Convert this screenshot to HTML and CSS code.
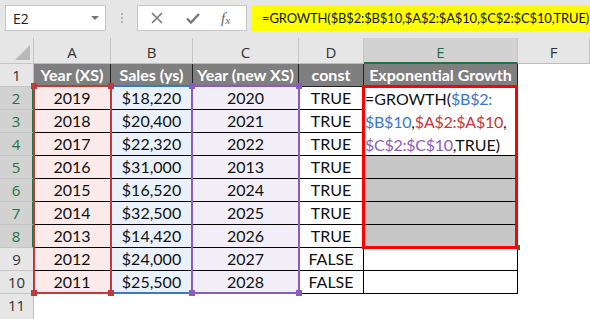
FILE: index.html
```html
<!DOCTYPE html>
<html lang="en">
<head>
  <meta charset="UTF-8">
  <title>GROWTH function</title>
  <link rel="stylesheet" href="styles.css">
</head>
<body>

<!-- Formula bar -->
<div class="formula-bar">
  <div class="name-box">
    <span>E2</span>
    <span class="caret"></span>
  </div>
  <div class="grip"><i></i><i></i><i></i></div>
  <div class="fx-box">
    <svg class="icon" width="12" height="12" viewBox="0 0 12 12">
      <path d="M1 1 L11 11 M11 1 L1 11" stroke="#7a7a7a" stroke-width="1.6" fill="none"/>
    </svg>
    <svg class="icon" width="14" height="11" viewBox="0 0 14 11">
      <path d="M1 5.5 L5 9.5 L13 1" stroke="#7a7a7a" stroke-width="2.4" fill="none"/>
    </svg>
    <span class="fx">f<sub>x</sub></span>
  </div>
  <div class="formula">=GROWTH($B$2:$B$10,$A$2:$A$10,$C$2:$C$10,TRUE)</div>
</div>

<!-- Sheet -->
<div class="sheet">
  <div class="corner"><span class="tri"></span></div>
  <div class="col">A</div>
  <div class="col">B</div>
  <div class="col">C</div>
  <div class="col">D</div>
  <div class="col sel">E</div>
  <div class="col">F</div>

  <div class="rh">1</div>
  <div class="h">Year (XS)</div>
  <div class="h">Sales (ys)</div>
  <div class="h">Year (new XS)</div>
  <div class="h">const</div>
  <div class="h">Exponential Growth</div>
  <div class="x"></div>

  <div class="edit">
    <div>=GROWTH(<span class="ref-b">$B$2:</span></div>
    <div><span class="ref-b">$B$10</span>,<span class="ref-a">$A$2:$A$10</span>,</div>
    <div><span class="ref-c">$C$2:$C$10</span>,TRUE)</div>
  </div>

  <div class="rh sel">2</div>
  <div class="d a">2019</div><div class="d b">$18,220</div><div class="d c">2020</div><div class="d">TRUE</div>
  <div class="x"></div>

  <div class="rh sel">3</div>
  <div class="d a">2018</div><div class="d b">$20,400</div><div class="d c">2021</div><div class="d">TRUE</div>
  <div class="x"></div>

  <div class="rh sel">4</div>
  <div class="d a">2017</div><div class="d b">$22,320</div><div class="d c">2022</div><div class="d">TRUE</div>
  <div class="x"></div>

  <div class="rh sel">5</div>
  <div class="d a">2016</div><div class="d b">$31,000</div><div class="d c">2013</div><div class="d">TRUE</div>
  <div class="d g"></div><div class="x"></div>

  <div class="rh sel">6</div>
  <div class="d a">2015</div><div class="d b">$16,520</div><div class="d c">2024</div><div class="d">TRUE</div>
  <div class="d g"></div><div class="x"></div>

  <div class="rh sel">7</div>
  <div class="d a">2014</div><div class="d b">$32,500</div><div class="d c">2025</div><div class="d">TRUE</div>
  <div class="d g"></div><div class="x"></div>

  <div class="rh sel">8</div>
  <div class="d a">2013</div><div class="d b">$14,420</div><div class="d c">2026</div><div class="d">TRUE</div>
  <div class="d g"></div><div class="x"></div>

  <div class="rh">9</div>
  <div class="d a">2012</div><div class="d b">$24,000</div><div class="d c">2027</div><div class="d">FALSE</div>
  <div class="d"></div><div class="x"></div>

  <div class="rh">10</div>
  <div class="d a">2011</div><div class="d b">$25,500</div><div class="d c">2028</div><div class="d">FALSE</div>
  <div class="d"></div><div class="x"></div>

  <div class="rh last">11</div>
  <div class="x rest"></div>

  <!-- range highlights drawn over the grid -->
  <div class="range range-b"><i class="hd tl"></i><i class="hd tr"></i><i class="hd bl"></i><i class="hd br"></i></div>
  <div class="range range-a"><i class="hd tl"></i><i class="hd tr"></i><i class="hd bl"></i><i class="hd br"></i></div>
  <div class="range range-c"><i class="hd tl"></i><i class="hd tr"></i><i class="hd bl"></i><i class="hd br"></i></div>
  <div class="selection"></div>
  <div class="fill-handle"></div>
</div>

</body>
</html>
```

FILE: styles.css
```css
body {
  margin: 0;
  background-color: #e6e6e6;
  font-family: Lato, "Liberation Sans", sans-serif;
  overflow: hidden;
}

/* formula bar */
.formula-bar {
  height: 38px;
  display: flex;
  align-items: flex-start;
  padding: 5px 0 0 5px;
  box-sizing: border-box;
  font-family: "Open Sans", sans-serif;
}
.name-box {
  width: 101px;
  height: 26px;
  box-sizing: border-box;
  background-color: white;
  border: 1px solid #c6c6c6;
  display: flex;
  align-items: center;
  justify-content: space-between;
  padding: 0 6px 0 7px;
  font-size: 14px;
  color: #222;
}
.caret {
  width: 0;
  height: 0;
  border-left: 4px solid transparent;
  border-right: 4px solid transparent;
  border-top: 4px solid #777;
}
.grip {
  width: 31px;
  height: 26px;
  display: flex;
  flex-direction: column;
  align-items: center;
  justify-content: center;
  gap: 2px;
}
.grip i {
  width: 2px;
  height: 2px;
  background-color: #b3b3b3;
}
.fx-box {
  width: 110px;
  height: 26px;
  box-sizing: border-box;
  background-color: white;
  border: 1px solid #c6c6c6;
  display: flex;
  align-items: center;
  padding-left: 13px;
  gap: 23px;
}
.fx {
  font-family: "Liberation Serif", serif;
  font-style: italic;
  font-size: 15px;
  color: #666;
  margin-left: -2px;
}
.fx sub {
  font-size: 11px;
  vertical-align: -1px;
}
.formula {
  margin-left: 4px;
  flex: 1;
  height: 26px;
  background-color: #ffff00;
  padding-left: 11px;
  font-family: Lato, sans-serif;
  font-size: 13px;
  letter-spacing: -0.15px;
  line-height: 26px;
  white-space: nowrap;
  overflow: hidden;
  color: #111;
}

/* sheet grid */
.sheet {
  position: relative;
  display: grid;
  grid-template-columns: 34px 77px 82px 106px 65px 154px 1fr;
  grid-template-rows: 26px repeat(10, 23px) 1fr;
  height: 281px;
  background-color: white;
  font-size: 16px;
}
.sheet > div {
  box-sizing: border-box;
}
.corner {
  background-color: #e6e6e6;
  border-right: 1px solid #c6c6c6;
  border-bottom: 1px solid #c6c6c6;
  position: relative;
}
.tri {
  position: absolute;
  right: 3px;
  bottom: 3px;
  width: 0;
  height: 0;
  border-left: 15px solid transparent;
  border-bottom: 15px solid #b8b8b8;
}
.col {
  background-color: #e6e6e6;
  border-right: 1px solid #c6c6c6;
  border-bottom: 1px solid #bdbdbd;
  text-align: center;
  padding-top: 4px;
  font-family: "Open Sans", sans-serif;
  font-size: 15px;
  color: #333;
}
.col.sel {
  background-color: #d2d2d2;
  color: #217346;
  border-bottom: 2px solid #217346;
}
.rh {
  background-color: #e6e6e6;
  border-right: 1px solid #bdbdbd;
  border-bottom: 1px solid #c6c6c6;
  text-align: center;
  line-height: 22px;
  font-family: "Open Sans", sans-serif;
  font-size: 15px;
  color: #333;
}
.rh.sel {
  background-color: #d2d2d2;
  color: #217346;
  border-right: 2px solid #217346;
}
.rh.last {
  border-bottom: none;
}
.h {
  background-color: #7f7f7f;
  color: white;
  font-weight: bold;
  border-right: 1px solid #222;
  border-bottom: 1px solid #222;
  text-align: center;
  line-height: 22px;
  white-space: nowrap;
}
.d {
  border-right: 1px solid #000;
  border-bottom: 1px solid #000;
  text-align: center;
  line-height: 22px;
  color: #111;
}
.d.a { background-color: #fbeaea; }
.d.b { background-color: #eaf1fb; }
.d.c { background-color: #f1eef8; }
.d.g { background-color: #c6c6c6; }
.rest {
  grid-column: 2 / -1;
}

/* cell in edit mode, spans E2:E4 */
.edit {
  grid-column: 6;
  grid-row: 3 / 6;
  background-color: white;
  border-right: 1px solid #000;
  border-bottom: 1px solid #000;
  padding-left: 1px;
  line-height: 23px;
  color: #111;
  white-space: nowrap;
}
.ref-a, .ref-b, .ref-c { letter-spacing: -0.25px; }
.ref-a { color: #c0393b; }
.ref-b { color: #3b78c9; }
.ref-c { color: #8b5cc0; }

/* overlays */
.range {
  position: absolute;
  top: 47px;
  height: 209px;
  border: 2px solid;
  box-sizing: border-box;
}
.range-a { left: 33px; width: 79px; border-color: #c0393b; }
.range-b { left: 110px; width: 83px; border-color: #3b78c9; }
.range-c { left: 191px; width: 109px; border-color: #8b5cc0; }
.hd {
  position: absolute;
  width: 6px;
  height: 6px;
}
.range-a .hd { background-color: #c0393b; }
.range-b .hd { background-color: #3b78c9; }
.range-c .hd { background-color: #8b5cc0; }
.hd.tl { left: -4px; top: -4px; }
.hd.tr { right: -4px; top: -4px; }
.hd.bl { left: -4px; bottom: -4px; }
.hd.br { right: -4px; bottom: -4px; }
.selection {
  position: absolute;
  left: 362px;
  top: 47px;
  width: 156px;
  height: 164px;
  border: 3px solid #ff0000;
  box-sizing: border-box;
}
.fill-handle {
  position: absolute;
  left: 517px;
  top: 207px;
  width: 3px;
  height: 5px;
  background-color: #217346;
}
```
